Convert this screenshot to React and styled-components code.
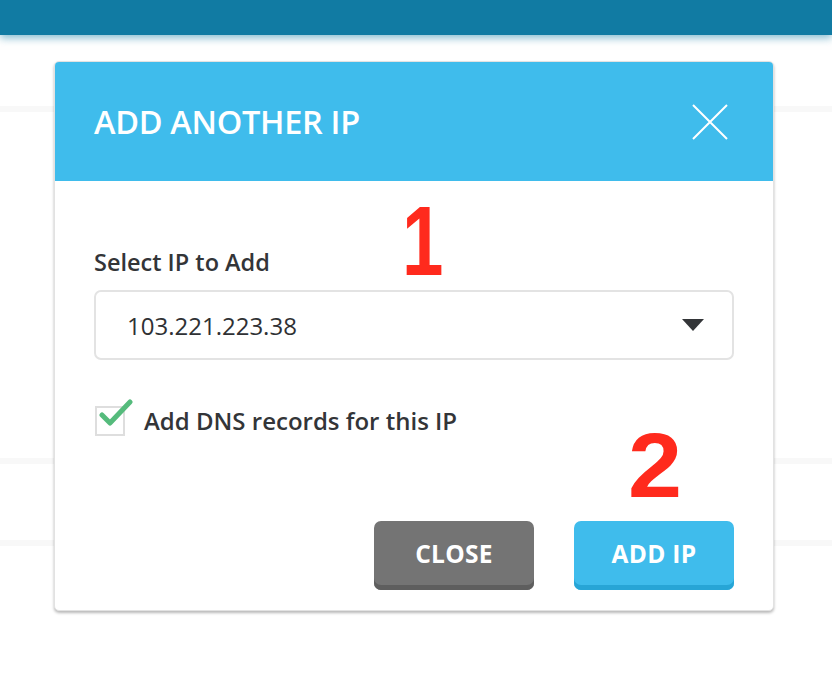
import React from "react";
import styled, { createGlobalStyle } from "styled-components";

const GlobalStyle = createGlobalStyle`
  html, body { margin: 0; padding: 0; background: #ffffff; }
  body { font-family: "Open Sans", "Liberation Sans", sans-serif; }
  * { box-sizing: border-box; }
`;

const Page = styled.div`
  position: relative;
  width: 832px;
  height: 678px;
  overflow: hidden;
  background: #ffffff;
`;

const TopBar = styled.div`
  height: 35px;
  background: #117ba3;
  box-shadow: 0 3px 8px rgba(17, 123, 163, 0.5);
`;

const BgList = styled.div`
  display: flex;
  flex-direction: column;
`;

const BgRow = styled.div`
  height: ${(p) => p.$h}px;
  border-bottom: 6px solid #f8f8f8;
`;

const Modal = styled.div`
  position: absolute;
  left: 54px;
  top: 61px;
  width: 720px;
  background: #ffffff;
  border-radius: 5px;
  border: 1px solid #e2e2e2;
  box-shadow: 0 2px 3px rgba(0, 0, 0, 0.28);
  overflow: hidden;
`;

const Header = styled.div`
  height: 119px;
  background: #3fbcec;
  display: flex;
  align-items: center;
  justify-content: space-between;
  padding: 0 45px 0 39px;
`;

const Title = styled.h2`
  margin: 0;
  color: #ffffff;
  font-family: "Open Sans", sans-serif;
  font-weight: 600;
  font-size: 32.5px;
  letter-spacing: -0.3px;
`;

const CloseX = styled.button`
  width: 36px;
  height: 36px;
  padding: 0;
  border: 0;
  background: transparent;
  display: flex;
  cursor: pointer;
`;

const Body = styled.div`
  position: relative;
  padding: 65px 39px 20px 39px;
  display: flex;
  flex-direction: column;
`;

const Label = styled.label`
  font-family: "Open Sans", sans-serif;
  font-weight: 600;
  font-size: 23.5px;
  line-height: 32px;
  color: #333538;
`;

const SelectBox = styled.div`
  margin-top: 12px;
  height: 70px;
  border: 2px solid #e3e3e3;
  border-radius: 7px;
  display: flex;
  align-items: center;
  justify-content: space-between;
  padding: 0 28px 0 31px;
  font-family: "Open Sans", sans-serif;
  font-size: 24px;
  color: #2f3134;
`;

const Caret = styled.span`
  width: 0;
  height: 0;
  border-left: 11px solid transparent;
  border-right: 11px solid transparent;
  border-top: 12px solid #333538;
`;

const CheckRow = styled.div`
  margin-top: 45px;
  display: flex;
  align-items: center;
  gap: 19px;
`;

const CheckBox = styled.span`
  position: relative;
  width: 30px;
  height: 30px;
  border: 2px solid #dedede;
  flex: none;
  margin-left: 1px;
`;

const CheckMark = styled.svg`
  position: absolute;
  left: 2px;
  top: -9px;
`;

const CheckLabel = styled.span`
  font-family: "Open Sans", sans-serif;
  font-weight: 600;
  font-size: 24px;
  line-height: 32px;
  color: #333538;
`;

const Actions = styled.div`
  margin-top: 84px;
  display: flex;
  justify-content: flex-end;
  gap: 40px;
`;

const Button = styled.button`
  width: 160px;
  height: 69px;
  border: 0;
  border-radius: 7px;
  background: ${(p) => p.$bg};
  box-shadow: inset 0 -5px 0 ${(p) => p.$edge};
  color: #ffffff;
  font-family: "Open Sans", sans-serif;
  font-weight: 700;
  font-size: 24.5px;
  letter-spacing: 0.3px;
  padding: 0 0 5px 0;
  cursor: pointer;
`;

const Marker = styled.span`
  position: absolute;
  left: ${(p) => p.$x}px;
  top: ${(p) => p.$y}px;
  font-family: "Liberation Sans", Arial, sans-serif;
  font-weight: 700;
  font-size: ${(p) => p.$size}px;
  line-height: 1;
  color: #ff2a1d;
  transform: scaleX(${(p) => p.$sx});
  transform-origin: left top;
`;

export default function App() {
  return (
    <Page>
      <GlobalStyle />
      <TopBar />
      <BgList>
        <BgRow $h={77} />
        <BgRow $h={352} />
        <BgRow $h={82} />
      </BgList>
      <Modal>
        <Header>
          <Title>ADD ANOTHER IP</Title>
          <CloseX aria-label="Close">
            <svg width="36" height="36" viewBox="0 0 36 36">
              <path d="M1 1 L35 35 M35 1 L1 35" stroke="#ffffff" strokeWidth="2" />
            </svg>
          </CloseX>
        </Header>
        <Body>
          <Marker $x={347} $y={11} $size={98} $sx={0.76}>1</Marker>
          <Marker $x={573} $y={240} $size={90} $sx={1.08}>2</Marker>
          <Label>Select IP to Add</Label>
          <SelectBox>
            <span>103.221.223.38</span>
            <Caret />
          </SelectBox>
          <CheckRow>
            <CheckBox>
              <CheckMark width="34" height="30" viewBox="0 0 34 30">
                <path d="M3 16 L11 24 L31 3" fill="none" stroke="#55bb7c" strokeWidth="5" strokeLinecap="round" strokeLinejoin="round" />
              </CheckMark>
            </CheckBox>
            <CheckLabel>Add DNS records for this IP</CheckLabel>
          </CheckRow>
          <Actions>
            <Button $bg="#747474" $edge="#5e5e5e">CLOSE</Button>
            <Button $bg="#3fbcec" $edge="#27a5d6">ADD IP</Button>
          </Actions>
        </Body>
      </Modal>
    </Page>
  );
}
